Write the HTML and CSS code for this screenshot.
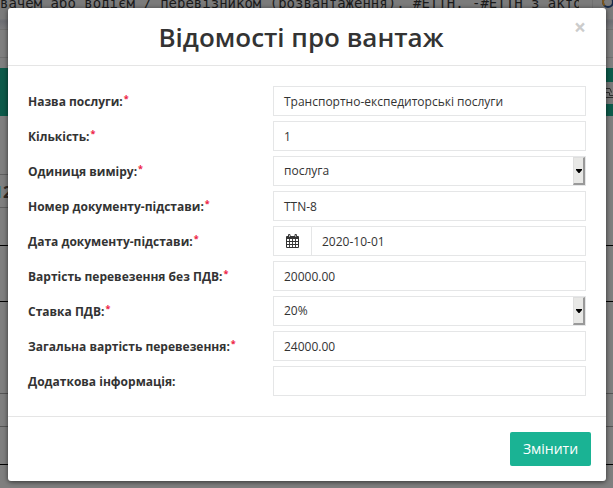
FILE: index.html
```html
<!DOCTYPE html>
<html lang="uk">
<head>
<meta charset="utf-8">
<title>Відомості про вантаж</title>
<link rel="stylesheet" href="styles.css">
</head>
<body>
<div class="page">
  <div class="tabs"><span class="tabs-text">вачем або водієм / перевізником (розвантаження). #ЕТТН. -#ЕТТН з актом</span><span class="search"><svg width="13" height="10" viewBox="0 0 13 10"><circle cx="7" cy="2" r="5" fill="none" stroke="#172a48" stroke-width="2"/><path d="M3.500 5.500A5 5 0 0 1 3.500 -1.500" fill="none" stroke="#80581a" stroke-width="2"/></svg></span></div>
  <div class="shade"></div>
  <div class="strip"></div>
  <div class="gap"></div>
  <div class="green"><span class="tool"><svg width="7" height="12" viewBox="0 0 7 12"><path d="M0 1.500h4l1.500 4M0 5.500h3M3.500 5.500v3H7M0 10.500h7" fill="none" stroke="#2c2c2c"/></svg></span></div>
  <div class="blank"></div>
  <div class="number"><span class="digit-blue">1</span>2</div>
  <div class="row row-a"></div>
  <div class="row row-b"></div>
  <div class="row row-c"></div>
  <div class="row row-d"></div>
  <div class="row row-e"></div>
</div>
<form class="modal">
  <header class="head"><h4>Відомості про вантаж</h4><span class="close">×</span></header>
  <div class="body">
    <div class="field"><label>Назва послуги:<sup>*</sup></label><div class="control">Транспортно-експедиторські послуги</div></div>
    <div class="field"><label>Кількість:<sup>*</sup></label><div class="control">1</div></div>
    <div class="field"><label>Одиниця виміру:<sup>*</sup></label><div class="control select">послуга<span class="arrow"><svg width="6" height="4" viewBox="0 0 6 4"><path d="M0 0h6v1L3.500 4h-1L0 1z"/></svg></span></div></div>
    <div class="field"><label>Номер документу-підстави:<sup>*</sup></label><div class="control">TTN-8</div></div>
    <div class="field"><label>Дата документу-підстави:<sup>*</sup></label><div class="control date"><span class="addon"><svg width="13" height="14" viewBox="0 0 13 14"><path fill="#333" d="M1 2h1V1q0-1 1.200-1T4.500 1v1h4V1q0-1 1.200-1T11 1v1h1q1 0 1 1v10q0 1-1 1H1q-1 0-1-1V3q0-1 1-1z"/><path fill="#fff" d="M1 5h2.100v2.100H1zM4 5h2.100v2.100H4zM7 5h2.100v2.100H7zM10 5h2v2.100h-2zM1 8h2.100v2.100H1zM4 8h2.100v2.100H4zM7 8h2.100v2.100H7zM10 8h2v2.100h-2zM1 11h2.100v2H1zM4 11h2.100v2H4zM7 11h2.100v2H7zM10 11h2v2h-2zM3 1h.6v2H3zM9.500 1h.6v2h-.6z"/></svg></span>2020-10-01</div></div>
    <div class="field"><label>Вартість перевезення без ПДВ:<sup>*</sup></label><div class="control">20000.00</div></div>
    <div class="field"><label>Ставка ПДВ:<sup>*</sup></label><div class="control select">20%<span class="arrow"><svg width="6" height="4" viewBox="0 0 6 4"><path d="M0 0h6v1L3.500 4h-1L0 1z"/></svg></span></div></div>
    <div class="field"><label>Загальна вартість перевезення:<sup>*</sup></label><div class="control">24000.00</div></div>
    <div class="field"><label>Додаткова інформація:</label><div class="control"></div></div>
  </div>
  <footer class="foot"><button type="button">Змінити</button></footer>
</form>
</body>
</html>
```
FILE: styles.css
```css
* { box-sizing: border-box; }
body {
  margin: 0;
  height: 488px;
  overflow: hidden;
  position: relative;
  font: 12px/18px "Open Sans", "Noto Sans", sans-serif;
  color: #333;
}
.page { height: 488px; background: #7f7f7f; }
.tabs { height: 19px; display: flex; overflow: hidden; background: #7b7b7b; }
.tabs-text {
  width: 579px;
  overflow: hidden;
  white-space: pre;
  font: 14px/17px "DejaVu Sans Mono", monospace;
  margin-top: -5px;
  color: #1b1b1b;
}
.search { width: 21px; margin-left: auto; padding-left: 8px; border-left: 1px solid #707070; }
.search svg { display: block; }
.shade { height: 11px; background: linear-gradient(#77777a, #6d6e73 20%, #7b7b7d); border-bottom: 1px solid #717171; }
.strip { height: 28px; border-bottom: 1px solid #707070; }
.gap { height: 10px; }
.green { height: 48px; background: #0d5a4a; padding-top: 14px; display: flex; justify-content: flex-end; }
.tool { width: 10px; height: 22px; background: #797979; padding: 5px 0 0 3px; }
.tool svg { display: block; }
.blank { height: 59px; width: 8px; border-bottom: 1px solid #5f5f5f; }
.number {
  height: 33px;
  width: 8px;
  overflow: hidden;
  border-bottom: 1px solid #5f5f5f;
  display: flex;
  font: bold 16px/34px "Open Sans", sans-serif;
  color: #302823;
  text-indent: -6px;
}
.digit-blue { color: #427a94; width: 9px; flex: none; }
.row { border-bottom: 1px solid #555; }
.row-a { height: 38px; border-color: #000; }
.row-b { height: 56px; border-color: #000; }
.row-c { height: 92px; }
.row-d { height: 33px; }
.row-e { height: 38px; border-color: #000; }
.modal {
  position: absolute;
  top: 8px;
  left: 8px;
  width: 598px;
  height: 473px;
  background: #fff;
  border-radius: 3px;
  box-shadow: 0 1px 5px rgba(0, 0, 0, .6);
}
.head { height: 58px; border-bottom: 1px solid #e5e5e5; text-align: center; padding: 15px; }
h4 { margin: 0; font-size: 26px; font-weight: 600; line-height: 29px; padding-right: 12px; }
.close { position: absolute; right: 20px; top: 9px; font: bold 21px/20px "Open Sans", sans-serif; color: #ccc; }
.body { padding: 20px 20px 0; height: 350px; display: flex; flex-direction: column; gap: 5px; }
.field { height: 30px; display: flex; align-items: center; }
label { width: 245px; font-weight: 700; white-space: nowrap; padding-top: 2px; }
sup { color: #ed1c45; font-size: 9px; line-height: 0; vertical-align: 4px; margin-left: 1px; font-weight: 700; }
.control { width: 313px; height: 30px; border: 1px solid #e5e6e7; padding: 0 10px; line-height: 29px; display: flex; }
.select { padding-right: 0; line-height: 27px; }
.arrow {
  margin-left: auto;
  width: 12px;
  height: 28px;
  background: #e8e8e6;
  border: 1px solid #dedede;
  border-right: 2px solid #999;
  border-bottom: 2px solid #999;
  display: flex;
  align-items: center;
  justify-content: center;
}
.date { padding-left: 0; }
.addon { width: 38px; border-right: 1px solid #e5e6e7; margin-right: 10px; display: flex; align-items: center; justify-content: center; }
.foot { border-top: 1px solid #e5e5e5; height: 65px; padding: 15px; display: flex; justify-content: flex-end; }
button { width: 81px; height: 34px; border: 0; border-radius: 2px; background: #1ab394; color: #fff; font: 14px/20px "Open Sans", sans-serif; padding: 0; }
```
